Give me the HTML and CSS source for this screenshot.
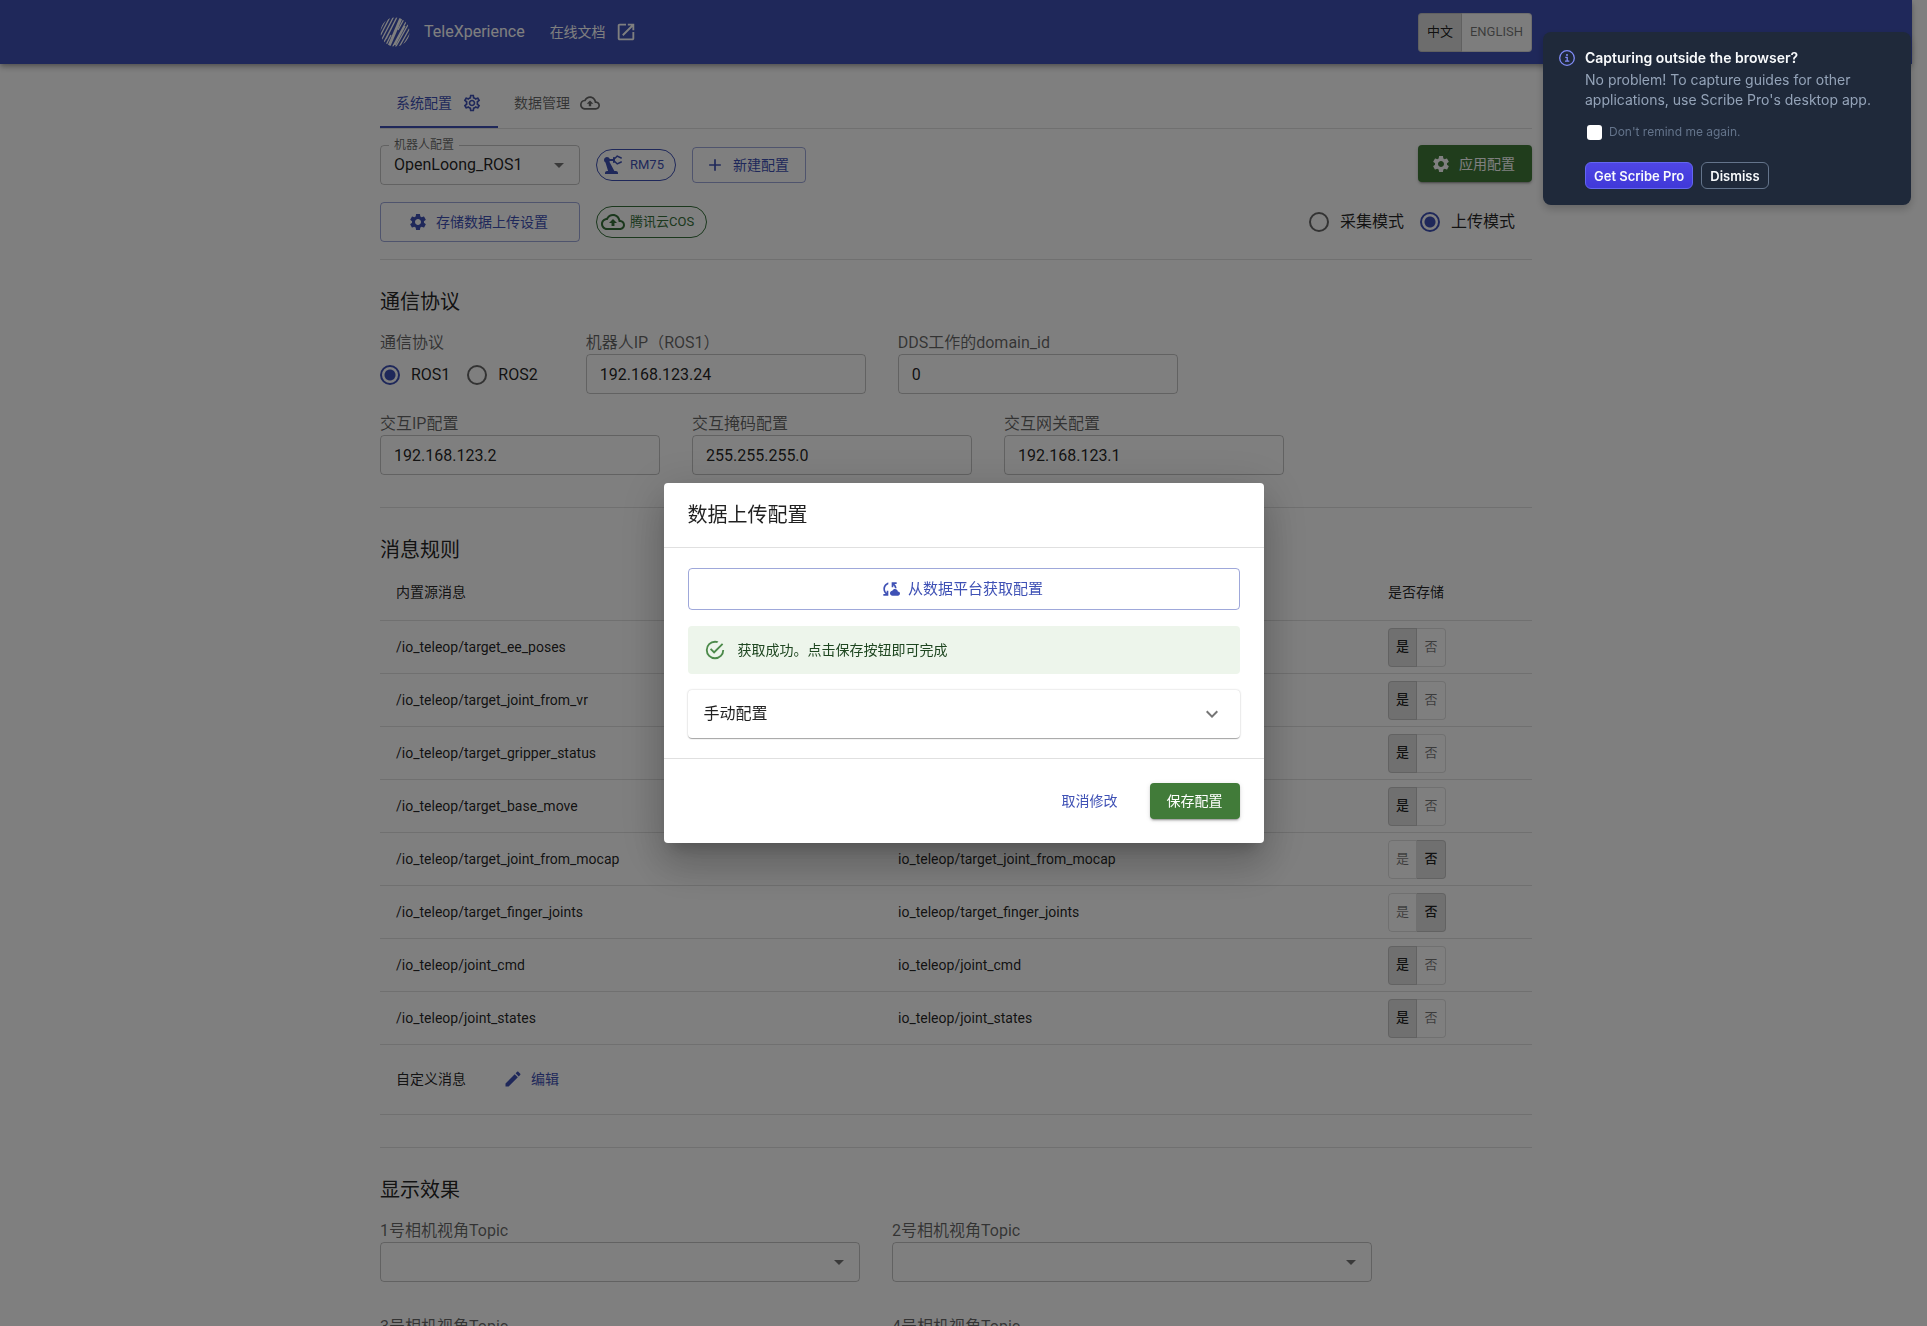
FILE: index.html
```html
<!DOCTYPE html>
<html lang="zh-CN">
<head>
<meta charset="utf-8">
<title>TeleXperience</title>
<link rel="stylesheet" href="styles.css">
</head>
<body>
<svg class="sprite" aria-hidden="true">
  <symbol id="i-gear" viewBox="0 0 24 24"><path d="M19.14 12.94c.04-.3.06-.61.06-.94 0-.32-.02-.64-.07-.94l2.03-1.58c.18-.14.23-.41.12-.61l-1.92-3.32c-.12-.22-.37-.29-.59-.22l-2.39.96c-.5-.38-1.03-.7-1.62-.94l-.36-2.54c-.04-.24-.24-.41-.48-.41h-3.84c-.24 0-.43.17-.47.41l-.36 2.54c-.59.24-1.13.57-1.62.94l-2.39-.96c-.22-.08-.47 0-.59.22L2.74 8.87c-.12.21-.08.47.12.61l2.03 1.58c-.05.3-.09.63-.09.94s.02.64.07.94l-2.03 1.58c-.18.14-.23.41-.12.61l1.92 3.32c.12.22.37.29.59.22l2.39-.96c.5.38 1.03.7 1.62.94l.36 2.54c.05.24.24.41.48.41h3.84c.24 0 .44-.17.47-.41l.36-2.54c.59-.24 1.13-.56 1.62-.94l2.39.96c.22.08.47 0 .59-.22l1.92-3.32c.12-.22.07-.47-.12-.61l-2.01-1.58zM12 15.6c-1.98 0-3.6-1.62-3.6-3.6s1.62-3.6 3.6-3.6 3.6 1.62 3.6 3.6-1.62 3.6-3.6 3.6z"/></symbol>
  <symbol id="i-gear-outline" viewBox="0 0 24 24"><path d="M19.43 12.98c.04-.32.07-.64.07-.98 0-.34-.03-.66-.07-.98l2.11-1.65c.19-.15.24-.42.12-.64l-2-3.46c-.09-.16-.26-.25-.44-.25-.06 0-.12.01-.17.03l-2.49 1c-.52-.4-1.08-.73-1.69-.98l-.38-2.65C14.46 2.18 14.25 2 14 2h-4c-.25 0-.46.18-.49.42l-.38 2.65c-.61.25-1.17.59-1.69.98l-2.49-1c-.06-.02-.12-.03-.18-.03-.17 0-.34.09-.43.25l-2 3.46c-.13.22-.07.49.12.64l2.11 1.65c-.04.32-.07.65-.07.98 0 .33.03.66.07.98l-2.11 1.65c-.19.15-.24.42-.12.64l2 3.46c.09.16.26.25.44.25.06 0 .12-.01.17-.03l2.49-1c.52.4 1.08.73 1.69.98l.38 2.65c.03.24.24.42.49.42h4c.25 0 .46-.18.49-.42l.38-2.65c.61-.25 1.17-.59 1.69-.98l2.49 1c.06.02.12.03.18.03.17 0 .34-.09.43-.25l2-3.46c.12-.22.07-.49-.12-.64l-2.11-1.65zm-1.98-1.71c.04.31.05.52.05.73 0 .21-.02.43-.05.73l-.14 1.13.89.7 1.08.84-.7 1.21-1.27-.51-1.04-.42-.9.68c-.43.32-.84.56-1.25.73l-1.06.43-.16 1.13-.2 1.35h-1.4l-.19-1.35-.16-1.13-1.06-.43c-.43-.18-.83-.41-1.23-.71l-.91-.7-1.06.43-1.27.51-.7-1.21 1.08-.84.89-.7-.14-1.13c-.03-.31-.05-.54-.05-.74s.02-.43.05-.73l.14-1.13-.89-.7-1.08-.84.7-1.21 1.27.51 1.04.42.9-.68c.43-.32.84-.56 1.25-.73l1.06-.43.16-1.13.2-1.35h1.39l.19 1.35.16 1.13 1.06.43c.43.18.83.41 1.23.71l.91.7 1.06-.43 1.27-.51.7 1.21-1.07.85-.89.7.14 1.13zM12 8c-2.21 0-4 1.79-4 4s1.79 4 4 4 4-1.79 4-4-1.79-4-4-4zm0 6c-1.1 0-2-.9-2-2s.9-2 2-2 2 .9 2 2-.9 2-2 2z"/></symbol>
  <symbol id="i-cloud-up" viewBox="0 0 24 24"><path d="M19.35 10.04C18.67 6.59 15.64 4 12 4 9.11 4 6.6 5.64 5.35 8.04 2.34 8.36 0 10.91 0 14c0 3.31 2.69 6 6 6h13c2.76 0 5-2.24 5-5 0-2.64-2.05-4.78-4.65-4.96zM19 18H6c-2.21 0-4-1.79-4-4 0-2.05 1.53-3.76 3.56-3.97l1.07-.11.5-.95C8.08 7.14 9.94 6 12 6c2.62 0 4.88 1.86 5.39 4.43l.3 1.5 1.53.11c1.56.1 2.78 1.41 2.78 2.96 0 1.65-1.35 3-3 3zM8 13h2.55v3h2.9v-3H16l-4-4z"/></symbol>
  <symbol id="i-drop" viewBox="0 0 24 24"><path d="M7 10l5 5 5-5z"/></symbol>
</svg>

<header class="appbar">
  <div class="container appbar-inner">
    <svg class="logo" viewBox="0 0 30 30" aria-hidden="true">
      <defs><clipPath id="logo-clip"><circle cx="15" cy="15" r="14.5"/></clipPath></defs>
      <g clip-path="url(#logo-clip)" stroke="currentColor" fill="none">
        <path stroke-width="1.3" d="M-2 17L8 -2M-1 21L11 -2M1 24L14 -1M3 27L17 0M6 28L11 18M18 13L24 2M12 31L27 3M15 31L29 6M18 32L31 9M21 32L33 12M6 22L16 2M15 28L25 9"/>
        <path stroke-width="3" d="M9 29L21 1"/>
      </g>
    </svg>
    <span class="brand">TeleXperience</span>
    <a class="doc-link" href="#docs">在线文档
      <svg class="icon-22" viewBox="0 0 24 24" aria-hidden="true"><path d="M19 19H5V5h7V3H5c-1.11 0-2 .9-2 2v14c0 1.1.89 2 2 2h14c1.1 0 2-.9 2-2v-7h-2v7zM14 3v2h3.59l-9.83 9.83 1.41 1.41L19 6.41V10h2V3h-7z"/></svg>
    </a>
    <div class="toggle lang">
      <button type="button" class="on">中文</button><button type="button">ENGLISH</button>
    </div>
  </div>
</header>

<main class="container">
  <nav class="tabs">
    <a class="tab active" href="#system">系统配置 <svg class="icon-20" aria-hidden="true"><use href="#i-gear-outline"/></svg></a>
    <a class="tab" href="#data">数据管理 <svg class="icon-20" aria-hidden="true"><use href="#i-cloud-up"/></svg></a>
  </nav>

  <section class="toolbar">
    <div class="bar">
      <div class="select-box robot">
        <label for="robot">机器人配置</label>
        <select id="robot"><option>OpenLoong_ROS1</option></select>
        <svg class="arrow" aria-hidden="true"><use href="#i-drop"/></svg>
      </div>
      <span class="chip primary"><svg class="icon-24" viewBox="0 0 24 24" aria-hidden="true"><path d="m19.93 8.35-3.6 1.68L14 7.7V6.3l2.33-2.33 3.6 1.68c.38.18.82.01 1-.36.18-.38.01-.82-.36-1l-3.92-1.83c-.38-.18-.83-.1-1.13.2L13.78 4.4c-.18-.24-.46-.4-.78-.4-.55 0-1 .45-1 1v1H8.82C8.4 4.84 7.3 4 6 4 4.34 4 3 5.34 3 7c0 1.1.6 2.05 1.48 2.58L7.08 18H6c-1.1 0-2 .9-2 2v1h13v-1c0-1.1-.9-2-2-2h-1.62L8.41 8.77c.17-.24.31-.49.41-.77H12v1c0 .55.45 1 1 1 .32 0 .6-.16.78-.4l1.74 1.74c.3.3.75.38 1.13.2l3.92-1.83c.38-.18.54-.62.36-1-.18-.37-.62-.54-1-.36z"/></svg>RM75</span>
      <button type="button" class="btn outlined"><svg class="icon-20" viewBox="0 0 24 24" aria-hidden="true"><path d="M19 13h-6v6h-2v-6H5v-2h6V5h2v6h6v2z"/></svg>新建配置</button>
      <button type="button" class="btn success apply"><svg class="icon-20" aria-hidden="true"><use href="#i-gear"/></svg>应用配置</button>
    </div>
    <div class="bar">
      <button type="button" class="btn outlined storage"><svg class="icon-20" aria-hidden="true"><use href="#i-gear"/></svg>存储数据上传设置</button>
      <span class="chip green"><svg class="icon-24" aria-hidden="true"><use href="#i-cloud-up"/></svg>腾讯云COS</span>
      <div class="radios mode">
        <label><input type="radio" name="mode">采集模式</label>
        <label><input type="radio" name="mode" checked>上传模式</label>
      </div>
    </div>
  </section>

  <section class="panel">
    <h2>通信协议</h2>
    <div class="fields">
      <div class="field-row">
        <div class="field auto" role="radiogroup" aria-labelledby="proto">
          <span id="proto" class="caption">通信协议</span>
          <div class="radios proto">
            <label><input type="radio" name="proto" checked>ROS1</label>
            <label><input type="radio" name="proto">ROS2</label>
          </div>
        </div>
        <div class="field"><label for="ip">机器人IP（ROS1）</label><input id="ip" type="text" value="192.168.123.24"></div>
        <div class="field"><label for="dds">DDS工作的domain_id</label><input id="dds" type="text" value="0"></div>
      </div>
      <div class="field-row">
        <div class="field"><label for="xip">交互IP配置</label><input id="xip" type="text" value="192.168.123.2"></div>
        <div class="field"><label for="mask">交互掩码配置</label><input id="mask" type="text" value="255.255.255.0"></div>
        <div class="field"><label for="gate">交互网关配置</label><input id="gate" type="text" value="192.168.123.1"></div>
      </div>
    </div>
  </section>

  <section class="panel rules">
    <h2>消息规则</h2>
    <table>
      <colgroup><col><col><col class="store"></colgroup>
      <thead><tr><th>内置源消息</th><th></th><th>是否存储</th></tr></thead>
      <tbody>
        <tr><td>/io_teleop/target_ee_poses</td><td></td><td><div class="toggle"><button type="button" class="on">是</button><button type="button">否</button></div></td></tr>
        <tr><td>/io_teleop/target_joint_from_vr</td><td></td><td><div class="toggle"><button type="button" class="on">是</button><button type="button">否</button></div></td></tr>
        <tr><td>/io_teleop/target_gripper_status</td><td></td><td><div class="toggle"><button type="button" class="on">是</button><button type="button">否</button></div></td></tr>
        <tr><td>/io_teleop/target_base_move</td><td></td><td><div class="toggle"><button type="button" class="on">是</button><button type="button">否</button></div></td></tr>
        <tr><td>/io_teleop/target_joint_from_mocap</td><td>io_teleop/target_joint_from_mocap</td><td><div class="toggle"><button type="button">是</button><button type="button" class="on">否</button></div></td></tr>
        <tr><td>/io_teleop/target_finger_joints</td><td>io_teleop/target_finger_joints</td><td><div class="toggle"><button type="button">是</button><button type="button" class="on">否</button></div></td></tr>
        <tr><td>/io_teleop/joint_cmd</td><td>io_teleop/joint_cmd</td><td><div class="toggle"><button type="button" class="on">是</button><button type="button">否</button></div></td></tr>
        <tr><td>/io_teleop/joint_states</td><td>io_teleop/joint_states</td><td><div class="toggle"><button type="button" class="on">是</button><button type="button">否</button></div></td></tr>
      </tbody>
    </table>
    <div class="custom">
      <span>自定义消息</span>
      <button type="button" class="btn text"><svg class="icon-20" viewBox="0 0 24 24" aria-hidden="true"><path d="M3 17.25V21h3.75L17.81 9.94l-3.75-3.75L3 17.25zM20.71 7.04c.39-.39.39-1.02 0-1.41l-2.34-2.34c-.39-.39-1.02-.39-1.41 0l-1.83 1.83 3.75 3.75 1.83-1.83z"/></svg>编辑</button>
    </div>
  </section>

  <section class="panel">
    <h2>显示效果</h2>
    <div class="cameras">
      <div class="field"><label for="c1">1号相机视角Topic</label><div class="select-box"><select id="c1"></select><svg class="arrow" aria-hidden="true"><use href="#i-drop"/></svg></div></div>
      <div class="field"><label for="c2">2号相机视角Topic</label><div class="select-box"><select id="c2"></select><svg class="arrow" aria-hidden="true"><use href="#i-drop"/></svg></div></div>
      <div class="field"><label for="c3">3号相机视角Topic</label><div class="select-box"><select id="c3"></select><svg class="arrow" aria-hidden="true"><use href="#i-drop"/></svg></div></div>
      <div class="field"><label for="c4">4号相机视角Topic</label><div class="select-box"><select id="c4"></select><svg class="arrow" aria-hidden="true"><use href="#i-drop"/></svg></div></div>
    </div>
  </section>
</main>

<div class="backdrop">
  <div class="dialog" role="dialog" aria-modal="true" aria-labelledby="dlg-title">
    <h2 id="dlg-title">数据上传配置</h2>
    <div class="dialog-body">
      <button type="button" class="btn outlined large"><svg class="icon-20" viewBox="0 0 24 24" aria-hidden="true"><path d="M21.5 14.98c-.02 0-.03 0-.05.01C21.2 13.3 19.76 12 18 12c-1.4 0-2.6.83-3.16 2.02C13.26 14.1 12 15.4 12 17c0 1.66 1.34 3 3 3l6.5-.02c1.38 0 2.5-1.12 2.5-2.5s-1.12-2.5-2.5-2.5zM10 4.26v2.09C7.67 7.18 6 9.39 6 12c0 1.77.78 3.34 2 4.44V14h2v6H4v-2h2.73C5.06 16.54 4 14.4 4 12c0-3.73 2.55-6.85 6-7.74zM20 6h-2.73c1.43 1.26 2.41 3.01 2.66 5h-2.02c-.23-1.36-.93-2.55-1.91-3.44V10h-2V4h6v2z"/></svg>从数据平台获取配置</button>
      <div class="alert" role="alert"><svg class="icon-22" viewBox="0 0 24 24" aria-hidden="true"><path d="M20,12A8,8 0 0,1 12,20A8,8 0 0,1 4,12A8,8 0 0,1 12,4C12.76,4 13.5,4.11 14.2,4.31L15.77,2.74C14.61,2.26 13.34,2 12,2A10,10 0 0,0 2,12A10,10 0 0,0 12,22A10,10 0 0,0 22,12M7.91,10.08L6.5,11.5L11,16L21,6L19.59,4.58L11,13.17L7.91,10.08Z"/></svg>获取成功。点击保存按钮即可完成</div>
      <button type="button" class="accordion" aria-expanded="false">手动配置<svg class="icon-24" viewBox="0 0 24 24" aria-hidden="true"><path d="M16.59 8.59L12 13.17 7.41 8.59 6 10l6 6 6-6z"/></svg></button>
    </div>
    <div class="dialog-actions">
      <button type="button" class="btn text">取消修改</button>
      <button type="button" class="btn success">保存配置</button>
    </div>
  </div>
</div>

<aside class="notice">
  <svg class="info" viewBox="0 0 16 16" aria-hidden="true"><g fill="none" stroke="currentColor"><circle cx="8" cy="8" r="7.3" stroke-width="1.3"/><path stroke-width="1.3" d="M6.3 7.3H8.2V11M6 11.2h4.3"/></g><circle cx="8" cy="4.9" r="1" fill="currentColor"/></svg>
  <div class="notice-body">
    <strong>Capturing outside the browser?</strong>
    <p>No problem! To capture guides for other applications, use Scribe Pro's desktop app.</p>
    <label class="remind"><input type="checkbox">Don't remind me again.</label>
    <div class="notice-actions">
      <button type="button" class="pro">Get Scribe Pro</button>
      <button type="button" class="dismiss">Dismiss</button>
    </div>
  </div>
</aside>
</body>
</html>
```

FILE: styles.css
```css
:root {
  --primary: #3f51b5;
  --success: #417b39;
  --ink: rgba(0, 0, 0, 0.87);
  --muted: rgba(0, 0, 0, 0.6);
  --line: rgba(0, 0, 0, 0.12);
}

*, *::before, *::after { box-sizing: border-box; }

/* The right padding stands in for the scrollbar while the dialog locks scrolling. */
body {
  margin: 0;
  padding-right: 15px;
  height: 100vh;
  overflow: hidden;
  background: #fff;
  color: var(--ink);
  font: 16px/24px Roboto, "Noto Sans CJK SC", sans-serif;
}

button, input, select { font: inherit; color: inherit; }
button { cursor: pointer; }
h2 { margin: 0; font-size: 20px; line-height: 28px; font-weight: 400; }
svg { fill: currentColor; flex: none; }
.sprite { position: absolute; width: 0; height: 0; }
.icon-20 { width: 20px; height: 20px; }
.icon-22 { width: 22px; height: 22px; }
.icon-24 { width: 24px; height: 24px; }

.container { max-width: 1200px; margin: 0 auto; padding: 0 24px; }

/* App bar */
.appbar {
  background: var(--primary);
  color: #fff;
  box-shadow: 0 2px 4px -1px rgba(0, 0, 0, 0.2), 0 4px 5px rgba(0, 0, 0, 0.14), 0 1px 10px rgba(0, 0, 0, 0.12);
}
.appbar-inner { display: flex; align-items: center; height: 64px; }
.logo { width: 30px; height: 30px; margin-right: 14px; }
.brand { margin-right: 25px; }
.doc-link { display: flex; align-items: center; gap: 9px; color: inherit; font-size: 14px; text-decoration: none; }

/* Toggle groups */
.toggle { display: inline-flex; border-radius: 4px; }
.toggle button {
  height: 39px;
  padding: 0 8px;
  border: 1px solid var(--line);
  border-radius: 0 4px 4px 0;
  background: none;
  color: rgba(0, 0, 0, 0.54);
  font-size: 13px;
  line-height: 24px;
}
.toggle button:first-child { border-radius: 4px 0 0 4px; }
.toggle button + button { border-left: 0; }
.toggle .on { background: rgba(0, 0, 0, 0.12); color: var(--ink); }
.lang { margin-left: auto; background: #fafafa; }
td .toggle button { width: 29px; padding: 0; }
td .toggle .on { font-weight: 500; }

/* Tabs */
.tabs { display: flex; margin-top: 16px; border-bottom: 1px solid var(--line); }
.tab {
  display: flex;
  align-items: center;
  gap: 10px;
  height: 48px;
  padding: 0 16px;
  border-bottom: 2px solid transparent;
  color: var(--muted);
  font-size: 14px;
  text-decoration: none;
}
.tab.active { border-color: var(--primary); color: var(--primary); }

/* Toolbar */
.toolbar { display: grid; gap: 17px; padding: 16px 0 17px; border-bottom: 1px solid var(--line); }
.bar { display: flex; align-items: center; gap: 16px; min-height: 40px; }

.btn {
  display: inline-flex;
  align-items: center;
  justify-content: center;
  gap: 8px;
  height: 36px;
  padding: 0 16px;
  border: 0;
  border-radius: 4px;
  background: none;
  font-size: 14px;
}
.btn svg { margin-left: -4px; }
.outlined { border: 1px solid rgba(63, 81, 181, 0.5); color: var(--primary); }
.success {
  min-width: 90px;
  background: var(--success);
  color: #fff;
  box-shadow: 0 3px 1px -2px rgba(0, 0, 0, 0.2), 0 2px 2px rgba(0, 0, 0, 0.14), 0 1px 5px rgba(0, 0, 0, 0.12);
}
.text { color: var(--primary); }
.apply { align-self: flex-start; margin-left: auto; min-width: 114px; height: 37px; }
.storage { width: 200px; height: 40px; }

.chip {
  display: inline-flex;
  align-items: center;
  gap: 5px;
  height: 32px;
  padding: 0 11px 0 4px;
  border: 1px solid;
  border-radius: 16px;
  font-size: 13px;
}
.chip.primary { color: var(--primary); }
.chip.green { padding-right: 12px; color: #36703a; }

/* Form controls */
.select-box { position: relative; }
.select-box select { display: block; cursor: pointer; }
.select-box select, .field input[type="text"] {
  width: 100%;
  height: 40px;
  padding: 0 13px;
  border: 1px solid rgba(0, 0, 0, 0.23);
  border-radius: 4px;
  background: none;
  appearance: none;
}
.arrow { position: absolute; top: 8px; right: 9px; width: 24px; height: 24px; fill: rgba(0, 0, 0, 0.54); pointer-events: none; }
.robot { width: 200px; }
.robot label {
  position: absolute;
  top: -8px;
  left: 9px;
  padding: 0 5px;
  background: #fff;
  color: var(--muted);
  font-size: 12px;
  line-height: 16px;
}

.radios { display: flex; align-items: center; gap: 16px; }
.radios label { display: flex; align-items: center; gap: 11px; }
.radios input {
  width: 20px;
  height: 20px;
  margin: 0;
  border: 2px solid var(--muted);
  border-radius: 50%;
  appearance: none;
}
.radios input:checked { border-color: var(--primary); background: radial-gradient(circle, var(--primary) 5px, transparent 6px); }
.mode { margin-left: auto; padding-right: 17px; }
.proto { gap: 17px; height: 41px; padding-right: 16px; }

.panel { padding: 28px 0 32px; border-bottom: 1px solid var(--line); }
.panel > h2 { margin-bottom: 15px; }
.fields { display: grid; gap: 17px; }
.field-row { display: flex; gap: 32px; }
.field { width: 280px; }
.field.auto { width: auto; }
.field > label, .caption { display: block; color: var(--muted); line-height: 23px; }

/* Message rules */
.rules > h2 { margin-bottom: 0; }
table { width: 100%; table-layout: fixed; border-collapse: separate; border-spacing: 0; font-size: 14px; }
.store { width: 160px; }
th, td { height: 53px; padding: 0 16px; border-bottom: 1px solid var(--line); text-align: left; vertical-align: middle; }
th { height: 57px; font-weight: 400; }
th:first-child { width: 502px; }
td:last-child { line-height: 0; }
.custom { display: flex; align-items: center; gap: 25px; padding: 16px 16px 17px; border-bottom: 1px solid var(--line); font-size: 14px; }

.cameras { display: grid; grid-template-columns: repeat(2, 480px); gap: 33px 32px; }
.cameras .field { width: auto; }

/* Dialog */
.backdrop {
  position: fixed;
  inset: 0;
  z-index: 10;
  display: flex;
  align-items: center;
  justify-content: center;
  background: rgba(0, 0, 0, 0.5);
}
.dialog {
  width: 100%;
  max-width: 600px;
  border-radius: 4px;
  background: #fff;
  box-shadow: 0 11px 15px -7px rgba(0, 0, 0, 0.2), 0 24px 38px 3px rgba(0, 0, 0, 0.14), 0 9px 46px 8px rgba(0, 0, 0, 0.12);
}
.dialog h2 { padding: 18px 24px; }
.dialog-body {
  display: grid;
  gap: 16px;
  padding: 20px 24px;
  border: solid var(--line);
  border-width: 1px 0;
}
.large { height: 42px; font-size: 15px; }
.alert {
  display: flex;
  align-items: center;
  gap: 12px;
  height: 48px;
  padding: 0 16px;
  border-radius: 4px;
  background: #edf5eb;
  color: #1e4620;
  font-size: 14px;
}
.alert svg { fill: #4c8a4a; }
.accordion {
  display: flex;
  align-items: center;
  justify-content: space-between;
  height: 48px;
  padding: 0 16px;
  border: 0;
  border-radius: 4px;
  background: #fff;
  box-shadow: 0 2px 1px -1px rgba(0, 0, 0, 0.2), 0 1px 1px rgba(0, 0, 0, 0.14), 0 0 2px rgba(0, 0, 0, 0.24);
}
.accordion svg { fill: rgba(0, 0, 0, 0.54); }
.dialog-actions { display: flex; justify-content: flex-end; gap: 16px; padding: 24px; }

/* Extension notice */
.notice {
  position: fixed;
  top: 32px;
  right: 16px;
  z-index: 20;
  display: flex;
  gap: 10px;
  width: 368px;
  padding: 16px;
  border-radius: 8px;
  background: #1f293a;
  box-shadow: 0 4px 8px rgba(0, 0, 0, 0.2);
  color: #94a3b8;
  font: 14px/20px Inter, sans-serif;
}
.info { width: 16px; height: 16px; margin-top: 2px; color: #818cf8; }
.notice strong { color: #f8fafc; font-weight: 600; }
.notice p { margin: 2px 0 0; }
.remind { display: flex; align-items: center; gap: 7px; margin: 12px 0 20px 2px; color: #64748b; font-size: 12px; }
.remind input { width: 15px; height: 15px; margin: 0; border-radius: 3px; background: #fff; appearance: none; }
.notice-actions { display: flex; gap: 8px; }
.notice-actions button { height: 27px; padding: 0 8px; border: 1px solid #64748b; border-radius: 6px; background: none; color: #f8fafc; font-size: 13px; font-weight: 600; }
.notice-actions .pro { border-color: #6366f1; background: linear-gradient(#4f46e5, #4038d8); }
```
